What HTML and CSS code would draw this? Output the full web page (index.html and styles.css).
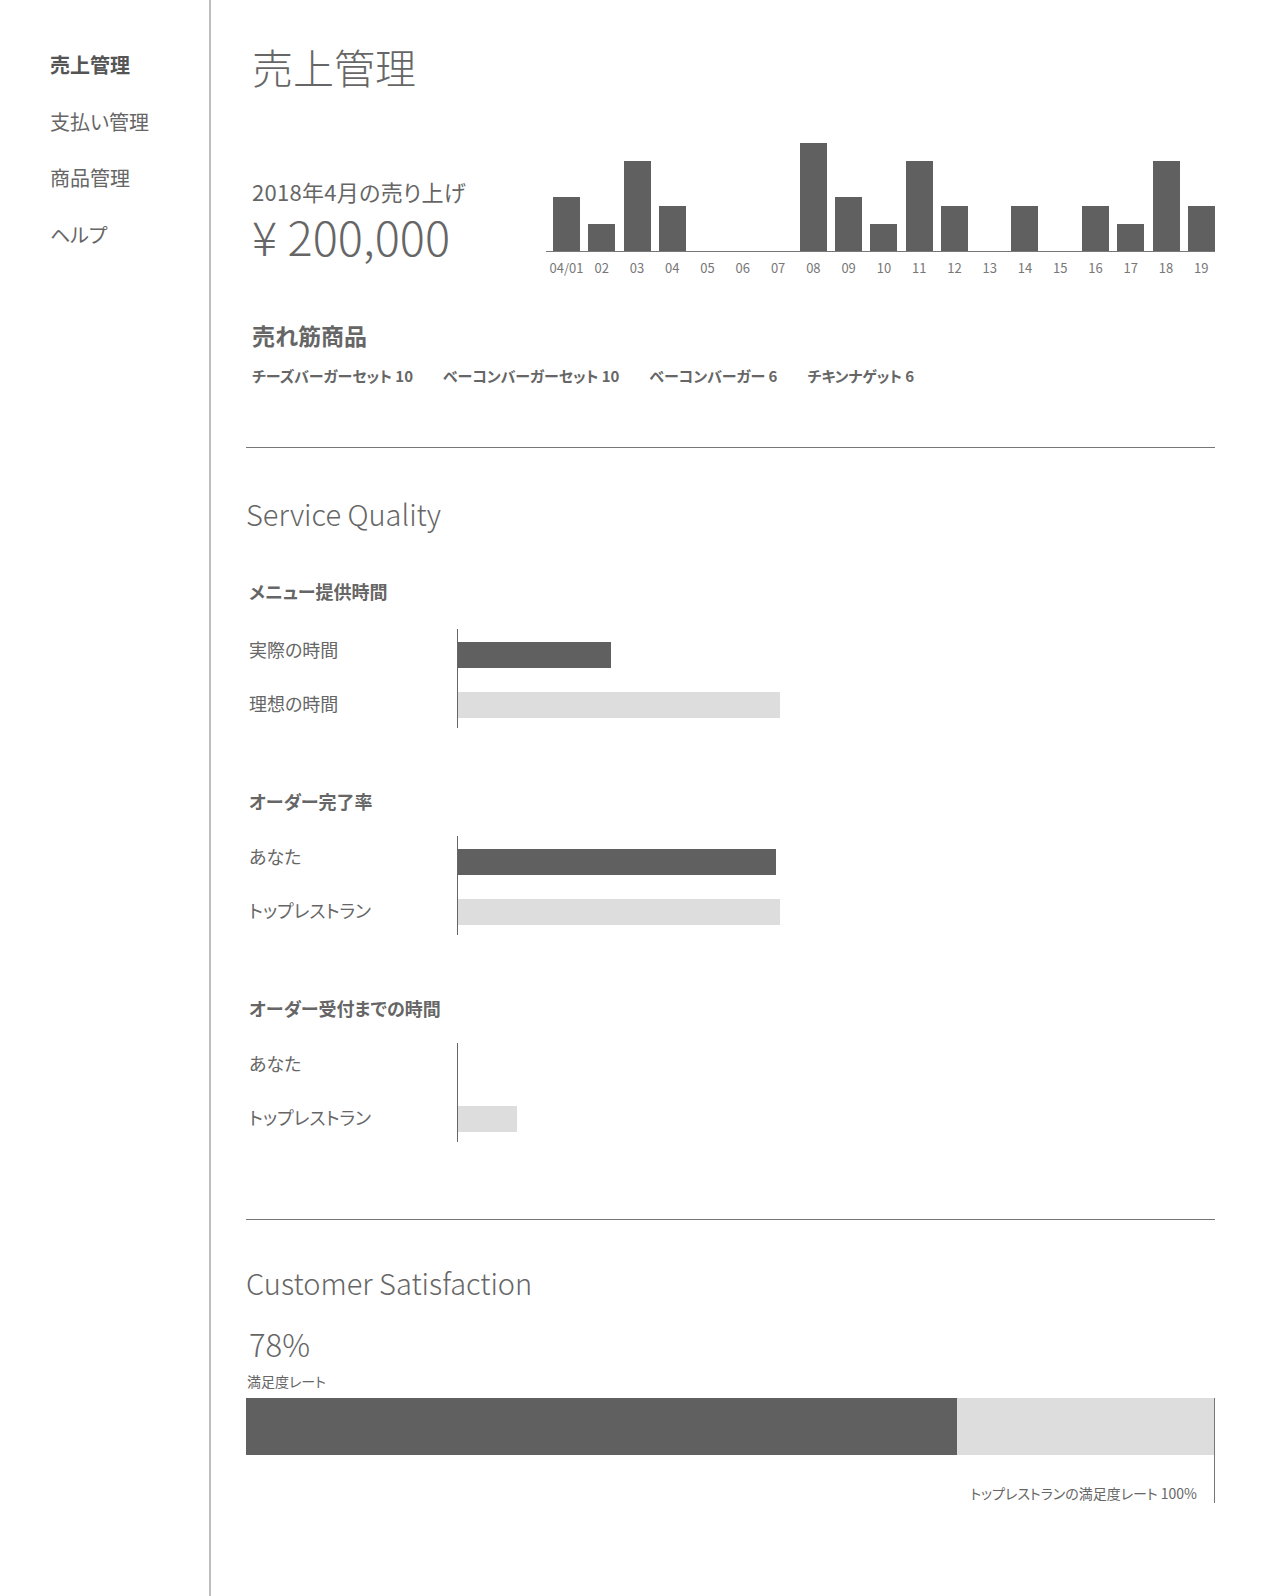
FILE: index.html
```html
<!DOCTYPE html>
<html lang="ja">
<head>
<meta charset="utf-8">
<title>売上管理</title>
<link rel="stylesheet" href="styles.css">
</head>
<body>
<div class="layout">
  <nav class="sidebar">
    <ul class="nav-list">
      <li class="nav-item is-active">売上管理</li>
      <li class="nav-item">支払い管理</li>
      <li class="nav-item">商品管理</li>
      <li class="nav-item">ヘルプ</li>
    </ul>
  </nav>
  <main class="main">
    <section class="overview">
      <h1 class="page-title">売上管理</h1>
      <div class="sales-row">
        <div class="sales-summary">
          <div class="sales-label">2018年4月の売り上げ</div>
          <div class="sales-amount">¥ 200,000</div>
        </div>
        <div class="chart">
          <div class="chart-bars">
            <div class="chart-bar" style="height:54px"></div>
            <div class="chart-bar" style="height:27px"></div>
            <div class="chart-bar" style="height:90px"></div>
            <div class="chart-bar" style="height:45px"></div>
            <div class="chart-bar" style="height:0"></div>
            <div class="chart-bar" style="height:0"></div>
            <div class="chart-bar" style="height:0"></div>
            <div class="chart-bar" style="height:108px"></div>
            <div class="chart-bar" style="height:54px"></div>
            <div class="chart-bar" style="height:27px"></div>
            <div class="chart-bar" style="height:90px"></div>
            <div class="chart-bar" style="height:45px"></div>
            <div class="chart-bar" style="height:0"></div>
            <div class="chart-bar" style="height:45px"></div>
            <div class="chart-bar" style="height:0"></div>
            <div class="chart-bar" style="height:45px"></div>
            <div class="chart-bar" style="height:27px"></div>
            <div class="chart-bar" style="height:90px"></div>
            <div class="chart-bar" style="height:45px"></div>
          </div>
          <div class="chart-labels">
            <span class="chart-label">04/01</span>
            <span class="chart-label">02</span>
            <span class="chart-label">03</span>
            <span class="chart-label">04</span>
            <span class="chart-label">05</span>
            <span class="chart-label">06</span>
            <span class="chart-label">07</span>
            <span class="chart-label">08</span>
            <span class="chart-label">09</span>
            <span class="chart-label">10</span>
            <span class="chart-label">11</span>
            <span class="chart-label">12</span>
            <span class="chart-label">13</span>
            <span class="chart-label">14</span>
            <span class="chart-label">15</span>
            <span class="chart-label">16</span>
            <span class="chart-label">17</span>
            <span class="chart-label">18</span>
            <span class="chart-label">19</span>
          </div>
        </div>
      </div>
      <div class="top-products">
        <h2 class="products-title">売れ筋商品</h2>
        <ul class="product-list">
          <li>チーズバーガーセット 10</li>
          <li>ベーコンバーガーセット 10</li>
          <li>ベーコンバーガー 6</li>
          <li>チキンナゲット 6</li>
        </ul>
      </div>
    </section>

    <hr class="divider divider-first">

    <section class="quality">
      <h2 class="section-title">Service Quality</h2>

      <div class="metric metric-first">
        <h3 class="metric-title">メニュー提供時間</h3>
        <div class="bar-chart">
          <div class="bar-labels">
            <span class="bar-label">実際の時間</span>
            <span class="bar-label">理想の時間</span>
          </div>
          <div class="bar-axis">
            <div class="bar bar-dark" style="width:153px"></div>
            <div class="bar bar-light" style="width:322px"></div>
          </div>
        </div>
      </div>

      <div class="metric">
        <h3 class="metric-title">オーダー完了率</h3>
        <div class="bar-chart">
          <div class="bar-labels">
            <span class="bar-label">あなた</span>
            <span class="bar-label">トップレストラン</span>
          </div>
          <div class="bar-axis">
            <div class="bar bar-dark" style="width:318px"></div>
            <div class="bar bar-light" style="width:322px"></div>
          </div>
        </div>
      </div>

      <div class="metric">
        <h3 class="metric-title">オーダー受付までの時間</h3>
        <div class="bar-chart">
          <div class="bar-labels">
            <span class="bar-label">あなた</span>
            <span class="bar-label">トップレストラン</span>
          </div>
          <div class="bar-axis">
            <div class="bar bar-dark" style="width:0"></div>
            <div class="bar bar-light" style="width:59px"></div>
          </div>
        </div>
      </div>
    </section>

    <hr class="divider divider-second">

    <section class="satisfaction">
      <h2 class="section-title section-title-sat">Customer Satisfaction</h2>
      <div class="score">78%</div>
      <div class="score-label">満足度レート</div>
      <div class="sat-chart">
        <div class="sat-bar">
          <div class="sat-fill" style="width:73.5%"></div>
          <div class="sat-rest"></div>
        </div>
        <div class="sat-caption">トップレストランの満足度レート 100%</div>
      </div>
    </section>
  </main>
</div>
</body>
</html>
```

FILE: styles.css
```css
* {
  box-sizing: border-box;
}

body {
  margin: 0;
  background: #fff;
  color: #666;
  font-family: "Noto Sans CJK JP", "Noto Sans", sans-serif;
  font-feature-settings: "palt";
}

.layout {
  display: flex;
  min-height: 1596px;
}

/* Sidebar */
.sidebar {
  width: 211px;
  flex-shrink: 0;
  border-right: 2px solid #bdbdbd;
  padding: 51px 0 0 50px;
}

.nav-list {
  list-style: none;
  margin: 0;
  padding: 0;
  display: flex;
  flex-direction: column;
  gap: 28.5px;
}

.nav-item {
  font-size: 20px;
  line-height: 28px;
  color: #666;
}

.nav-item.is-active {
  font-weight: 700;
  color: #555;
}

/* Main */
.main {
  flex: 1;
  min-width: 0;
  padding: 40px 65px 0 35px;
}

.overview {
  padding-left: 6px;
}

.page-title {
  margin: 0;
  font-size: 41px;
  line-height: 52px;
  font-weight: 300;
}

.sales-row {
  display: flex;
  margin-top: 51px;
}

.sales-summary {
  width: 294px;
  flex-shrink: 0;
  padding-top: 34px;
}

.sales-label {
  font-size: 22px;
  line-height: 28px;
  letter-spacing: 0.3px;
}

.sales-amount {
  margin-top: 5px;
  font-size: 47px;
  line-height: 52px;
  font-weight: 300;
}

.chart {
  flex: 1;
}

.chart-bars {
  display: flex;
  align-items: flex-end;
  justify-content: space-between;
  height: 109px;
  padding-left: 7px;
  border-bottom: 1px solid #777;
}

.chart-bar {
  width: 27px;
  background: #606060;
}

.chart-labels {
  display: flex;
  justify-content: space-between;
  padding-left: 7px;
  margin-top: 8px;
}

.chart-label {
  width: 27px;
  display: flex;
  justify-content: center;
  white-space: nowrap;
  font-size: 13px;
  line-height: 16px;
  color: #777;
}

.top-products {
  margin-top: 44px;
}

.products-title {
  margin: 0;
  font-size: 23px;
  line-height: 30px;
  font-weight: 700;
}

.product-list {
  list-style: none;
  margin: 15px 0 0;
  padding: 0;
  display: flex;
  gap: 30px;
  font-size: 15px;
  line-height: 22px;
  font-weight: 700;
}

.divider {
  border: 0;
  border-top: 1px solid #777;
  margin: 0;
}

.divider-first {
  margin-top: 60px;
}

.divider-second {
  margin-top: 77px;
}

.section-title {
  margin: 45px 0 0;
  font-size: 29px;
  line-height: 40px;
  font-weight: 300;
}

.section-title-sat {
  margin-top: 42px;
}

/* Quality metrics */
.metric {
  padding-left: 3px;
}

.metric-title {
  margin: 60px 0 22px;
  font-size: 18px;
  line-height: 26px;
  font-weight: 700;
}

.metric-first .metric-title {
  margin: 45px 0 25px;
}

.bar-chart {
  display: flex;
}

.bar-labels {
  width: 208px;
  flex-shrink: 0;
  padding-top: 7px;
  display: flex;
  flex-direction: column;
  gap: 28px;
}

.bar-label {
  font-size: 18px;
  line-height: 26px;
  white-space: nowrap;
}

.bar-axis {
  flex: 1;
  border-left: 1px solid #666;
  padding: 13px 0 10px;
  display: flex;
  flex-direction: column;
  gap: 24px;
}

.bar {
  height: 26px;
}

.bar-dark {
  background: #606060;
}

.bar-light {
  background: #ddd;
}

/* Satisfaction */
.score {
  margin-top: 22px;
  padding-left: 3px;
  font-size: 31px;
  line-height: 40px;
  font-weight: 300;
}

.score-label {
  margin-top: 7px;
  padding-left: 1px;
  font-size: 14px;
  line-height: 20px;
}

.sat-chart {
  margin-top: 7px;
  border-right: 1px solid #777;
}

.sat-bar {
  display: flex;
  height: 57px;
}

.sat-fill {
  background: #606060;
}

.sat-rest {
  flex: 1;
  background: #ddd;
}

.sat-caption {
  padding: 28px 17px 0 0;
  text-align: right;
  font-size: 14px;
  line-height: 20px;
}
```
